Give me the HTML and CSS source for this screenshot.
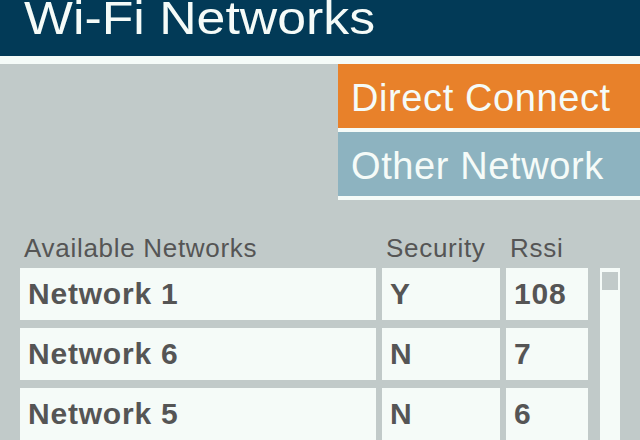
FILE: index.html
```html
<!DOCTYPE html>
<html lang="en">
<head>
    <meta charset="UTF-8">
    <meta name="viewport" content="width=device-width, initial-scale=1.0">
    <title>Wi-Fi Networks</title>
    <link rel="stylesheet" href="styles.css">
</head>
<body>

    <header class="title-bar">
        <h1>Wi-Fi Networks</h1>
    </header>

    <div class="actions">
        <button class="action direct">Direct Connect</button>
        <button class="action other">Other Network</button>
    </div>

    <div class="list-area">
        <div class="network-grid">
            <div class="col-label">Available Networks</div>
            <div class="col-label">Security</div>
            <div class="col-label">Rssi</div>

            <div class="cell">Network 1</div>
            <div class="cell">Y</div>
            <div class="cell">108</div>

            <div class="cell">Network 6</div>
            <div class="cell">N</div>
            <div class="cell">7</div>

            <div class="cell">Network 5</div>
            <div class="cell">N</div>
            <div class="cell">6</div>
        </div>

        <div class="scrollbar">
            <div class="thumb"></div>
        </div>
    </div>

</body>
</html>
```

FILE: styles.css
```css
body {
    font-family: "Liberation Sans", Arial, sans-serif;
    background-color: #c1cac9;
    margin: 0;
    padding: 0;
    width: 640px;
    height: 440px;
    overflow: hidden;
    color: #555;
}
.title-bar {
    background-color: #023a57;
    height: 56px;
    border-bottom: 8px solid #f5fbf8;
    overflow: hidden;
}
.title-bar h1 {
    margin: -5px 0 0 0;
    padding-left: 24px;
    font-size: 46px;
    font-weight: normal;
    line-height: 46px;
    color: #f5fbf8;
    white-space: nowrap;
    transform: scaleX(1.126);
    transform-origin: 24px 0;
}
.actions {
    display: flex;
    flex-direction: column;
    align-items: flex-end;
}
.action {
    width: 302px;
    height: 68px;
    padding: 4px 0 0 13px;
    border: none;
    border-bottom: 4px solid #f5fbf8;
    display: flex;
    align-items: center;
    font-family: inherit;
    font-size: 38px;
    letter-spacing: 0.6px;
    color: #f5fbf8;
    cursor: pointer;
}
.direct {
    background-color: #e8812a;
}
.other {
    background-color: #8db3c0;
}
.list-area {
    display: flex;
    gap: 12px;
    margin-top: 36px;
    padding-left: 20px;
}
.network-grid {
    display: grid;
    grid-template-columns: 356px 118px 82px;
    grid-auto-rows: 52px;
    grid-template-rows: 24px;
    column-gap: 6px;
    row-gap: 8px;
}
.col-label {
    padding-left: 4px;
    font-size: 26px;
    line-height: 24px;
    letter-spacing: 0.7px;
    white-space: nowrap;
}
.cell {
    background-color: #f5fbf8;
    display: flex;
    align-items: center;
    padding-left: 8px;
    font-size: 30px;
    font-weight: bold;
    letter-spacing: 0.8px;
}
.scrollbar {
    width: 20px;
    height: 172px;
    margin-top: 32px;
    padding: 4px 2px 0 2px;
    box-sizing: border-box;
    background-color: #f5fbf8;
}
.thumb {
    height: 18px;
    background-color: #c1cac9;
}
```
